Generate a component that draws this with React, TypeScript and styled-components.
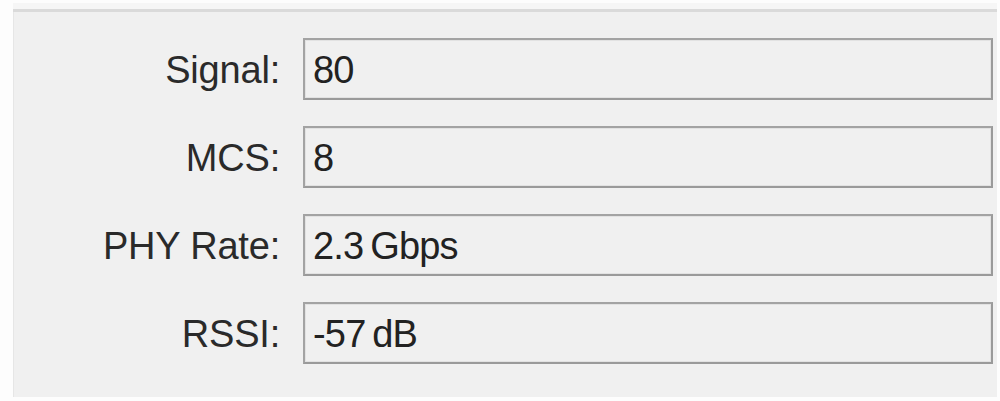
import React from 'react';
import styled, { createGlobalStyle } from 'styled-components';

const GlobalStyle = createGlobalStyle`
  html, body {
    margin: 0;
    padding: 0;
    background: #fdfdfd;
  }
  body {
    font-family: 'Liberation Sans', Arial, sans-serif;
  }
`;

const Page = styled.div`
  width: 1000px;
  height: 401px;
  padding: 3px 3px 0 13px;
  box-sizing: border-box;
`;

const Panel = styled.div`
  background: #f0f0f0;
  border-top: 6px solid #f6f6f6;
  box-shadow: inset 0 3px 0 #dadada, inset 1px 0 0 #e6e6e6;
  padding: 29px 4px 33px 0;
  display: grid;
  grid-template-columns: 267px 1fr;
  column-gap: 23px;
  row-gap: 26px;
  grid-auto-rows: 62px;
`;

const Label = styled.div`
  display: flex;
  align-items: center;
  justify-content: flex-end;
  padding-top: 2px;
  font-size: 38px;
  color: #2a2a2a;
  letter-spacing: -0.2px;
`;

const Field = styled.div`
  display: flex;
  align-items: center;
  box-sizing: border-box;
  border: 2px solid #a3a3a3;
  border-right-color: #9a9a9a;
  border-bottom-color: #9a9a9a;
  box-shadow: inset 0 0 0 1px #e2e2e2;
  background: #f0f0f0;
  padding: 2px 0 0 8px;
  font-size: 38px;
  color: #222;
  letter-spacing: -0.8px;
  white-space: nowrap;
  word-spacing: -3px;
`;

type Stat = { label: string; value: string };

const stats: Stat[] = [
  { label: 'Signal:', value: '80' },
  { label: 'MCS:', value: '8' },
  { label: 'PHY Rate:', value: '2.3 Gbps' },
  { label: 'RSSI:', value: '-57 dB' },
];

const App: React.FC = () => (
  <>
    <GlobalStyle />
    <Page>
      <Panel>
        {stats.map((s) => (
          <React.Fragment key={s.label}>
            <Label>{s.label}</Label>
            <Field>{s.value}</Field>
          </React.Fragment>
        ))}
      </Panel>
    </Page>
  </>
);

export default App;
